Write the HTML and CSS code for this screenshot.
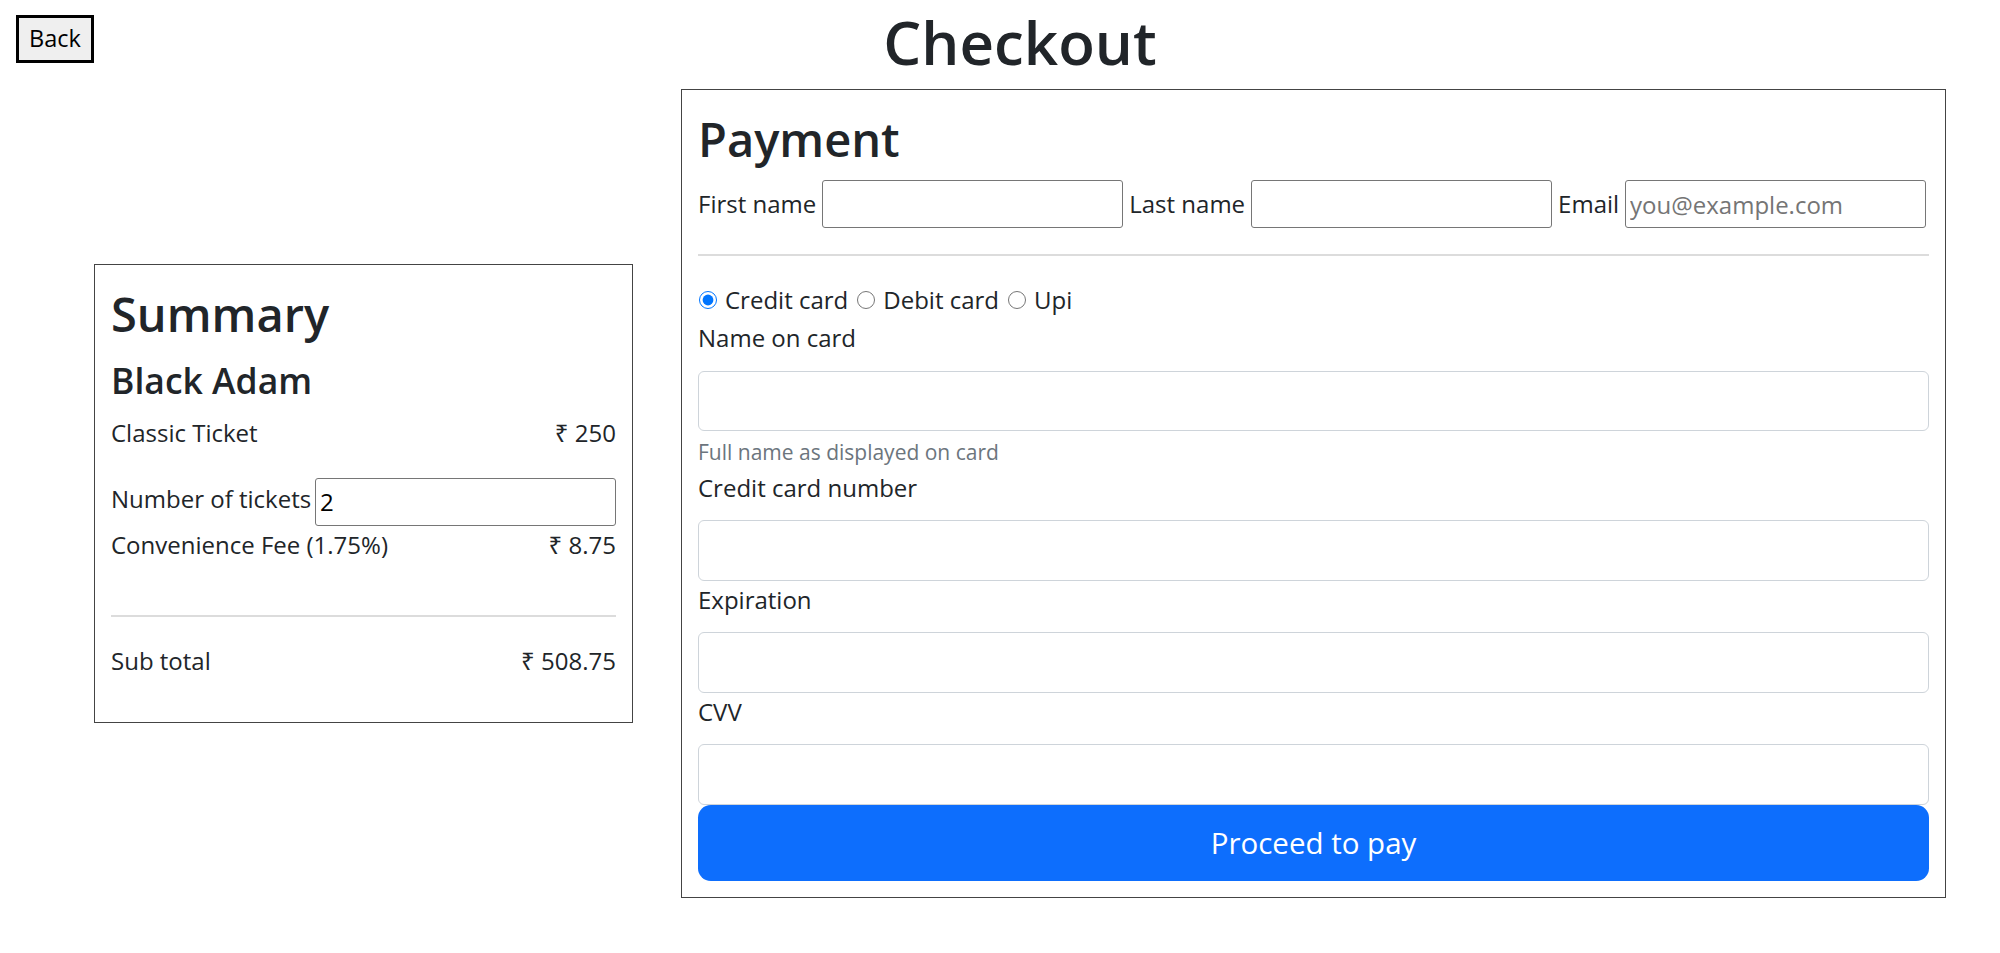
FILE: index.html
```html
<!DOCTYPE html>
<html lang="en">
<head>
<meta charset="utf-8">
<title>Checkout</title>
<link rel="stylesheet" href="styles.css">
</head>
<body>
<header class="topbar">
  <button class="back-btn" type="button">Back</button>
  <h1 class="page-title">Checkout</h1>
</header>
<main class="checkout">
  <section class="summary">
    <h2 class="box-title">Summary</h2>
    <h4 class="movie">Black Adam</h4>
    <p class="line"><span>Classic Ticket</span><span>₹ 250</span></p>
    <div class="line tickets"><label for="qty" class="tickets-label">Number of tickets</label><input id="qty" class="plain-input" type="text" value="2"></div>
    <p class="line"><span>Convenience Fee (1.75%)</span><span>₹ 8.75</span></p>
    <hr class="divider">
    <p class="line"><span>Sub total</span><span>₹ 508.75</span></p>
  </section>
  <section class="payment">
    <h2 class="box-title">Payment</h2>
    <div class="name-row">
      <label for="fn" class="inline-label">First name</label><input id="fn" class="plain-input" type="text">
      <label for="ln" class="inline-label">Last name</label><input id="ln" class="plain-input" type="text">
      <label for="em" class="inline-label">Email</label><input id="em" class="plain-input" type="email" placeholder="you@example.com">
    </div>
    <hr class="divider">
    <div class="methods">
      <input type="radio" name="method" id="credit" class="radio" checked><label for="credit" class="method-label">Credit card</label>
      <input type="radio" name="method" id="debit" class="radio"><label for="debit" class="method-label">Debit card</label>
      <input type="radio" name="method" id="upi" class="radio"><label for="upi" class="method-label">Upi</label>
    </div>
    <label for="cc-name" class="field-label">Name on card</label>
    <input id="cc-name" class="form-input" type="text">
    <small class="hint">Full name as displayed on card</small>
    <label for="cc-number" class="field-label">Credit card number</label>
    <input id="cc-number" class="form-input" type="text">
    <label for="cc-exp" class="field-label">Expiration</label>
    <input id="cc-exp" class="form-input" type="text">
    <label for="cc-cvv" class="field-label">CVV</label>
    <input id="cc-cvv" class="form-input" type="text">
    <button class="pay-btn" type="button">Proceed to pay</button>
  </section>
</main>
</body>
</html>
```

FILE: styles.css
```css
* {
  box-sizing: border-box;
}

body {
  margin: 0;
  font-family: "Open Sans", "Noto Sans", sans-serif;
  font-size: 24px;
  line-height: 38.4px;
  color: #212529;
  background: #fff;
}

.topbar {
  display: flex;
  align-items: flex-start;
  height: 89px;
  padding: 0 54px 0 16px;
}

.back-btn {
  margin-top: 15px;
  width: 78px;
  height: 48px;
  padding: 0;
  border: 3px solid #000;
  background: #efefef;
  color: #000;
  font-family: "Open Sans", "Noto Sans", sans-serif;
  font-size: 23.5px;
  line-height: 1;
}

.page-title {
  flex: 1;
  margin: 6px 0 0;
  text-align: center;
  font-size: 60px;
  font-weight: 600;
  line-height: 72px;
  color: #212529;
}

.checkout {
  display: flex;
  align-items: center;
  gap: 48px;
  padding: 0 54px 0 94px;
}

.summary {
  display: flex;
  flex-direction: column;
  width: 539px;
  flex: 0 0 539px;
  border: 1px solid #444;
  padding: 16px;
}

.payment {
  flex: 1;
  min-width: 0;
  border: 1px solid #444;
  padding: 16px;
}

.box-title {
  margin: 0 0 9.8px;
  padding-top: 3px;
  font-size: 47px;
  font-weight: 600;
  line-height: 61.44px;
}

.movie {
  margin: 0 0 10.8px;
  padding-top: 2px;
  font-size: 35.5px;
  font-weight: 600;
  line-height: 46.08px;
}

.line {
  display: flex;
  justify-content: space-between;
  margin: 0 0 25.6px;
}

.tickets {
  align-items: flex-start;
  margin: 0;
}

.tickets-label {
  padding-top: 2px;
  white-space: nowrap;
}

.plain-input {
  flex: 0 0 301px;
  width: 301px;
  height: 48px;
  padding: 0 4px;
  border: 1px solid #767676;
  border-radius: 3px;
  background: #fff;
  color: #000;
  font-family: "Open Sans", "Noto Sans", sans-serif;
  font-size: 24px;
}

.plain-input::placeholder {
  color: #757575;
}

.divider {
  margin: 25.4px 0;
  height: 0;
  border: 0;
  border-top: 2px solid #dcdcdc;
}

.name-row {
  display: flex;
  align-items: center;
  gap: 6px;
  height: 48px;
}

.inline-label {
  white-space: nowrap;
}

.methods {
  display: flex;
  align-items: center;
  height: 38.4px;
}

.radio {
  width: 18px;
  height: 18px;
  margin: 0 8px 0 1px;
}

.method-label {
  margin-right: 8px;
}

.field-label {
  display: block;
  margin-bottom: 12.8px;
}

.form-input {
  display: block;
  width: 100%;
  height: 60.8px;
  padding: 0 19px;
  border: 1px solid #ced4da;
  border-radius: 6px;
  background: #fff;
  font-family: inherit;
  font-size: 24px;
  color: #212529;
}

.hint {
  display: block;
  margin-top: 5px;
  font-size: 21px;
  line-height: 32.5px;
  color: #6c757d;
}

.pay-btn {
  display: block;
  width: 100%;
  height: 76px;
  border: 0;
  border-radius: 12.8px;
  background: #0d6efd;
  color: #fff;
  font-family: "Open Sans", "Noto Sans", sans-serif;
  font-size: 29.5px;
  line-height: 1.5;
}
```
